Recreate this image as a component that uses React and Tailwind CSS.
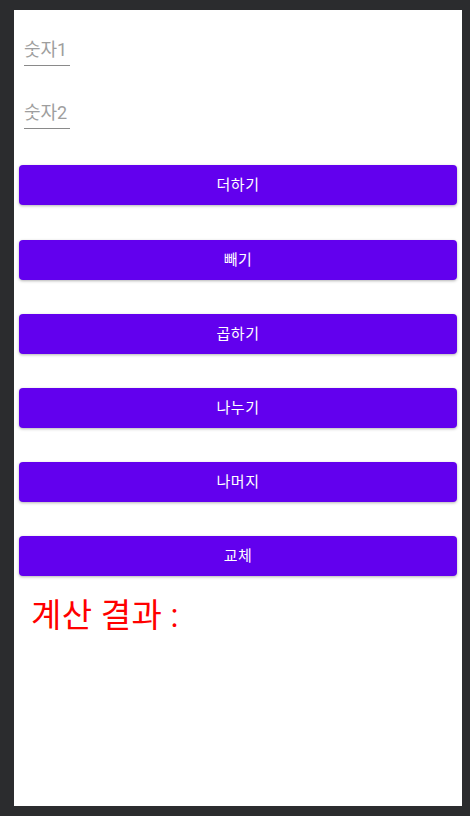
const buttons = ['더하기', '빼기', '곱하기', '나누기', '나머지', '교체']

function NumberField({ label }) {
  return (
    <div className="ml-[10px] w-[46px] border-b border-[#8a8a8a] pb-[3px]">
      <span className="block text-[18px] leading-[24px] text-[#9e9e9e]">{label}</span>
    </div>
  )
}

function App() {
  return (
    <main className="min-h-screen bg-[#2b2c2e] pl-[14px] pt-[10px] pb-[10px] font-['Roboto','Noto_Sans_CJK_KR',sans-serif]">
      <div className="flex h-[796px] w-[448px] flex-col bg-white">
        <div className="mt-[28px]">
          <NumberField label="숫자1" />
        </div>
        <div className="mt-[35px]">
          <NumberField label="숫자2" />
        </div>

        <div className="mt-[36px] flex flex-col gap-[34px] px-[5px]">
          {buttons.map((label, i) => (
            <button
              key={label}
              className={
                i === 0
                  ? 'mb-[1px] h-[40px] w-full rounded-[4px] bg-[#6200ee] text-[15px] tracking-[0.5px] text-white shadow-[0_1px_3px_rgba(0,0,0,0.3)]'
                  : 'h-[40px] w-full rounded-[4px] bg-[#6200ee] text-[15px] tracking-[0.5px] text-white shadow-[0_1px_3px_rgba(0,0,0,0.3)]'
              }
            >
              {label}
            </button>
          ))}
        </div>

        <p className="ml-[17px] mt-[19px] text-[33px] leading-[42px] tracking-[0.3px] text-[#ff0000]">
          계산 결과 :
        </p>
      </div>
    </main>
  )
}

export default App
